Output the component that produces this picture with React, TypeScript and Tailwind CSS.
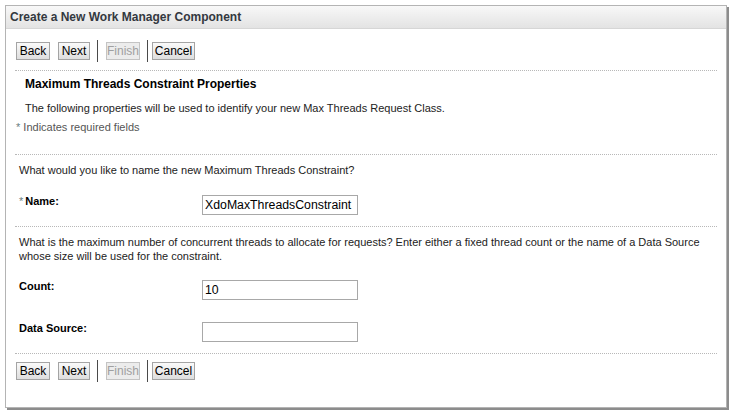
import React from 'react'

const font = { fontFamily: '"Liberation Sans", Arial, sans-serif' }

const Btn = ({ label, w, disabled }: { label: string; w: number; disabled?: boolean }) => (
  <button
    disabled={disabled}
    style={{ width: w }}
    className={
      'h-[18px] border text-[12px] leading-[16px] px-0 ' +
      (disabled
        ? 'border-[#c4c4c4] bg-[#ececec] text-[#a0a0a0]'
        : 'border-[#a4a4a4] bg-gradient-to-b from-[#fafafa] to-[#dedede] text-black')
    }
  >
    {label}
  </button>
)

const Sep = () => <div className="w-px h-[22px] bg-[#4a4a4a]" />

const ButtonRow = () => (
  <div className="flex items-center h-[22px] ml-[1px]">
    <Btn label="Back" w={34} />
    <div className="w-[8px]" />
    <Btn label="Next" w={32} />
    <div className="w-[7px]" />
    <Sep />
    <div className="w-[8px]" />
    <Btn label="Finish" w={34} disabled />
    <div className="w-[7px]" />
    <Sep />
    <div className="w-[4px]" />
    <Btn label="Cancel" w={43} />
  </div>
)

const Dotted = ({ className = '' }: { className?: string }) => (
  <div className={'border-t border-dotted border-[#b8b8b8] ' + className} />
)

const Field = ({
  label,
  value,
  required,
  className = '',
}: {
  label: string
  value: string
  required?: boolean
  className?: string
}) => (
  <div className={'flex items-start ' + className}>
    <div className="w-[183px] ml-[4px] -mt-[1px] text-[11px] leading-[14px] font-bold text-black">
      {required && <span className="font-normal text-[#6a8080] mr-[2px]">*</span>}
      {label}
    </div>
    <input
      readOnly
      defaultValue={value}
      className="w-[156px] h-[20px] border border-[#a8a8a8] bg-white px-[2px] text-[12.3px] text-black outline-none"
      style={font}
    />
  </div>
)

export default function App() {
  return (
    <div className="w-[735px] h-[417px] bg-white pl-[5px] pt-[5px]" style={font}>
      <div className="w-[722px] h-[403px] border border-[#b4b4b4] bg-white shadow-[2px_2px_0_#8c8c8c] flex flex-col">
        <div className="h-[23px] bg-gradient-to-b from-[#f8f8f8] to-[#e3e3e3] border-b border-[#d6d6d6] pl-[4px] flex items-center">
          <span className="text-[12px] font-bold text-[#33383f]">Create a New Work Manager Component</span>
        </div>
        <div className="pl-[9px] pr-[9px] text-[11px] leading-[14px] text-[#222]">
          <div className="mt-[11px]">
            <ButtonRow />
          </div>
          <Dotted className="mt-[8px]" />
          <div className="mt-[6px] ml-[10px] font-bold text-[12px] text-black">
            Maximum Threads Constraint Properties
          </div>
          <div className="mt-[10px] ml-[10px]">
            The following properties will be used to identify your new Max Threads Request Class.
          </div>
          <div className="mt-[5px] ml-[1px] text-[#555]">
            <span className="text-[#6a8080]">*</span> Indicates required fields
          </div>
          <Dotted className="mt-[20px]" />
          <div className="mt-[8px] ml-[4px]">What would you like to name the new Maximum Threads Constraint?</div>
          <Field className="mt-[18px]" label="Name:" value="XdoMaxThreadsConstraint" required />
          <Dotted className="mt-[11px]" />
          <div className="mt-[8px] ml-[4px]">
            What is the maximum number of concurrent threads to allocate for requests? Enter either a fixed thread count or the name of a Data Source
            <br />
            whose size will be used for the constraint.
          </div>
          <Field className="mt-[17px]" label="Count:" value="10" />
          <Field className="mt-[22px]" label="Data Source:" value="" />
          <Dotted className="mt-[11px]" />
          <div className="mt-[6px]">
            <ButtonRow />
          </div>
        </div>
      </div>
    </div>
  )
}
